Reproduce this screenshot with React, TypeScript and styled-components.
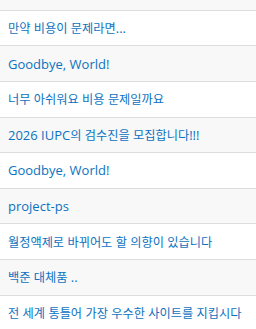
import React from 'react';
import styled, { createGlobalStyle } from 'styled-components';

const GlobalStyle = createGlobalStyle`
    html, body {
        margin: 0;
        padding: 0;
        background: #ffffff;
        overflow: hidden;
    }
    body {
        font-family: "Open Sans", "Noto Sans CJK KR", sans-serif;
    }
`;

const StyledList = styled.ul`
    list-style: none;
    margin: -25px 0 0 0;
    padding: 0;
`;

const StyledRow = styled.li<{ $striped: boolean }>`
    height: 35.625px;
    box-sizing: border-box;
    display: flex;
    align-items: center;
    padding: 0 8px;
    background: ${(p) => (p.$striped ? '#f8f8f8' : '#ffffff')};
    border-bottom: 1px solid #dddddd;
`;

const StyledLink = styled.a`
    font-size: 13px;
    color: #0c72c0;
    text-decoration: none;
    white-space: nowrap;
`;

// hangul runs render a touch narrower in the original
const StyledHangul = styled.span`
    font-family: "Noto Sans CJK KR", sans-serif;
    font-size: 12.2px;
`;

const posts = [
    'Goodbye, World!',
    '만약 비용이 문제라면...',
    'Goodbye, World!',
    '너무 아쉬워요 비용 문제일까요',
    '2026 IUPC의 검수진을 모집합니다!!!',
    'Goodbye, World!',
    'project-ps',
    '월정액제로 바뀌어도 할 의향이 있습니다',
    '백준 대체품 ..',
    '전 세계 통틀어 가장 우수한 사이트를 지킵시다',
];

const renderTitle = (title: string) =>
    title.split(/([\uAC00-\uD7A3]+)/).map((part, i) =>
        /[\uAC00-\uD7A3]/.test(part) ? <StyledHangul key={i}>{part}</StyledHangul> : part
    );

export default function App() {
    return (
        <>
            <GlobalStyle />
            <StyledList>
                {posts.map((title, i) => (
                    <StyledRow key={i} $striped={i % 2 === 0}>
                        <StyledLink href="#">{renderTitle(title)}</StyledLink>
                    </StyledRow>
                ))}
            </StyledList>
        </>
    );
}
